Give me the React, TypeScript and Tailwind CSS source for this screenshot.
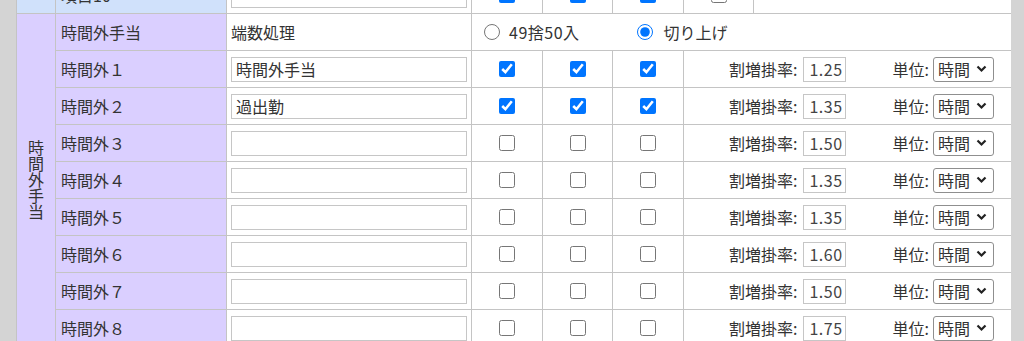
import React from "react";

const rates = ["1.25", "1.35", "1.50", "1.35", "1.35", "1.60", "1.50", "1.75"];
const names = ["時間外手当", "過出勤", "", "", "", "", "", ""];
const digits = ["１", "２", "３", "４", "５", "６", "７", "８"];

function Check({ on }: { on: boolean }) {
  return (
    <div className="flex items-center justify-center bg-white">
      <input type="checkbox" defaultChecked={on} className="m-0 h-4 w-4" />
    </div>
  );
}

function TextBox({ value }: { value: string }) {
  return (
    <div className="flex items-center bg-white px-[4px]">
      <div className="flex h-[25px] w-full items-center border border-[#c6c6c6] px-[4px] text-[16px] leading-none">
        {value}
      </div>
    </div>
  );
}

function RateCell({ rate }: { rate: string }) {
  return (
    <div className="col-span-2 flex items-center justify-end bg-white pr-[17px]">
      <span>割増掛率:</span>
      <div className="ml-[5px] flex h-[25px] w-[43px] items-center justify-end border border-[#c6c6c6] pr-[2px] tracking-[0.5px] text-[#444]">
        {rate}
      </div>
      <span className="ml-[47px]">単位:</span>
      <div className="ml-[4px] flex h-[25px] w-[61px] items-center justify-between rounded-[3px] border border-[#8f8f8f] pl-[4px] pr-[6px]">
        <span>時間</span>
        <svg width="11" height="8" viewBox="0 0 11 8" fill="none">
          <path d="M1.5 1.5 L5.5 5.5 L9.5 1.5" stroke="#222" strokeWidth="2.2" />
        </svg>
      </div>
    </div>
  );
}

export default function App() {
  return (
    <div
      className="h-[341px] w-[1024px] overflow-hidden bg-[#d4d4d4] text-[16px] text-[#333]"
      style={{ fontFamily: '"Noto Sans CJK JP", "Noto Sans", sans-serif' }}
    >
      <div className="-mt-[24px] ml-[16px] grid w-[995px] grid-cols-[38px_170px_244px_70px_69px_70px_69px_257px] auto-rows-[36px] gap-px border border-[#c4c4c4] bg-[#c4c4c4]">
        {/* partial row above */}
        <div className="bg-[#d0e1fb]" />
        <div className="flex items-center bg-[#d0e1fb] pl-[5px]">項目10</div>
        <TextBox value="" />
        <Check on />
        <Check on />
        <Check on />
        <Check on={false} />
        <div className="bg-white" />

        {/* overtime group */}
        <div className="row-span-9 flex items-center justify-center bg-[#dacfff]">
          <span className="leading-[16px] [writing-mode:vertical-rl]">時間外手当</span>
        </div>
        <div className="flex items-center bg-[#dacfff] pl-[5px]">時間外手当</div>
        <div className="flex items-center bg-white pl-[4px]">端数処理</div>
        <div className="col-span-5 flex items-center bg-white pl-[12px]">
          <input type="radio" name="round" className="m-0 h-4 w-4" />
          <span className="ml-[9px] tracking-[0.5px]">49捨50入</span>
          <input type="radio" name="round" defaultChecked className="m-0 ml-[57px] h-4 w-4" />
          <span className="ml-[11px]">切り上げ</span>
        </div>

        {rates.map((r, i) => (
          <React.Fragment key={i}>
            <div className="flex items-center bg-[#dacfff] pl-[5px]">時間外{digits[i]}</div>
            <TextBox value={names[i]} />
            <Check on={i < 2} />
            <Check on={i < 2} />
            <Check on={i < 2} />
            <RateCell rate={r} />
          </React.Fragment>
        ))}
      </div>
    </div>
  );
}
